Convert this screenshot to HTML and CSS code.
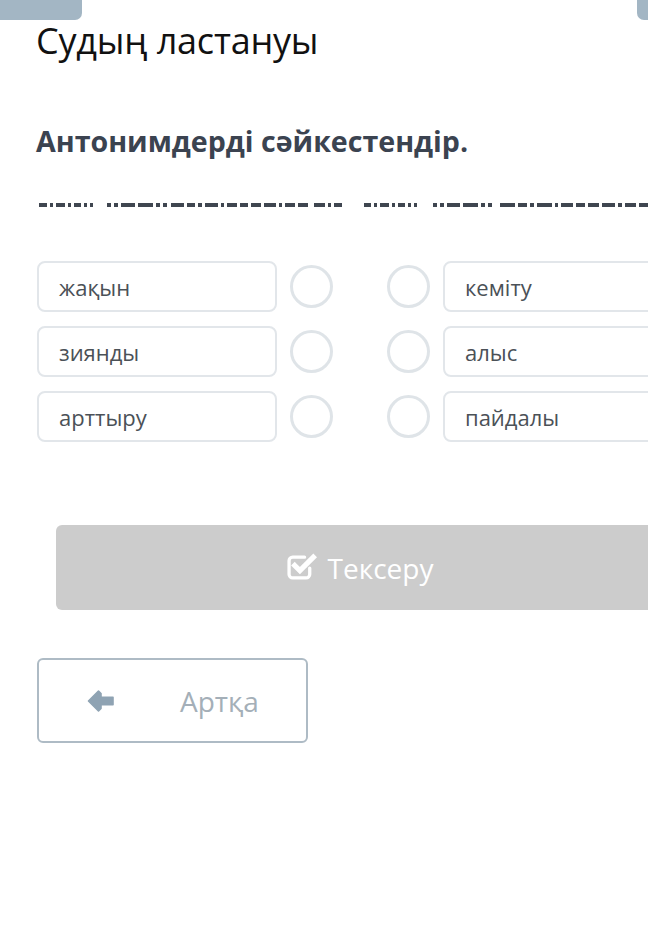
FILE: index.html
```html
<!DOCTYPE html>
<html lang="kk">
<head>
<meta charset="utf-8">
<title>Судың ластануы</title>
<link rel="stylesheet" href="styles.css">
</head>
<body>
<div class="page">
  <div class="topbar">
    <div class="tab tab-left"></div>
    <div class="tab tab-right"></div>
  </div>
  <h1 class="title">Судың ластануы</h1>
  <h2 class="task">Антонимдерді сәйкестендір.</h2>
  <div class="dashes">
    <span class="g g1"><i class="w5"></i><i class="w2"></i><i class="w6"></i><i class="w2"></i><i class="w5"></i><i class="w2"></i><i class="w2"></i></span>
    <span class="g g2"><i class="w2"></i><i class="w2"></i><i class="w7"></i><i class="w8"></i><i class="w2"></i><i class="w2"></i></span>
    <span class="g g3"><i class="w8"></i><i class="w5"></i><i class="w2"></i><i class="w8"></i><i class="w2"></i><i class="w6"></i><i class="w5"></i><i class="w6"></i><i class="w7"></i><i class="w2"></i><i class="w6"></i><i class="w6"></i></span>
    <span class="g g4"><i class="w7"></i><i class="w2"></i><i class="w5"></i></span>
    <span class="g g5"><i class="w5"></i><i class="w2"></i><i class="w6"></i><i class="w2"></i><i class="w5"></i><i class="w2"></i><i class="w2"></i></span>
    <span class="g g6"><i class="w2"></i><i class="w2"></i><i class="w7"></i><i class="w8"></i><i class="w2"></i><i class="w2"></i></span>
    <span class="g g7"><i class="w8"></i><i class="w5"></i><i class="w2"></i><i class="w8"></i><i class="w2"></i><i class="w6"></i><i class="w5"></i><i class="w6"></i><i class="w7"></i><i class="w2"></i><i class="w6"></i><i class="w6"></i></span>
  </div>

  <div class="match">
    <div class="row">
      <div class="item">жақын</div><span class="dot"></span>
      <span class="dot"></span><div class="item">кеміту</div>
    </div>
    <div class="row">
      <div class="item">зиянды</div><span class="dot"></span>
      <span class="dot"></span><div class="item">алыс</div>
    </div>
    <div class="row">
      <div class="item">арттыру</div><span class="dot"></span>
      <span class="dot"></span><div class="item">пайдалы</div>
    </div>
  </div>

  <button class="check" type="button">
    <svg class="check-icon" viewBox="0 0 30 28" width="31" height="29" aria-hidden="true">
      <path d="M22 15.5 V21.5 A3.5 3.5 0 0 1 18.5 25 H5.5 A3.5 3.5 0 0 1 2 21.5 V8.5 A3.5 3.5 0 0 1 5.5 5 H17" fill="none" stroke="#fff" stroke-width="3.2" stroke-linecap="round"/>
      <path d="M7.5 13 L12.5 18 L25.5 5" fill="none" stroke="#fff" stroke-width="5" stroke-linecap="square" stroke-linejoin="miter"/>
    </svg>
    <span>Тексеру</span>
  </button>

  <button class="back" type="button">
    <svg class="back-icon" viewBox="0 0 28 24" width="28" height="24" aria-hidden="true">
      <path d="M1.5 12 L11.5 2 L14 4.5 L14 8.3 L26 8.3 L26 15.7 L14 15.7 L14 19.5 L11.5 22 Z" fill="#8fa3b3" stroke="#8fa3b3" stroke-width="1.6" stroke-linejoin="round"/>
    </svg>
    <span>Артқа</span>
  </button>
</div>
</body>
</html>
```
FILE: styles.css
```css
html, body {
  margin: 0;
  padding: 0;
  background: #ffffff;
  overflow: hidden;
}
body {
  font-family: "Open Sans", "Noto Sans", sans-serif;
  width: 648px;
  height: 946px;
}
.page {
  width: 720px;
  display: flex;
  flex-direction: column;
  align-items: flex-start;
}
.topbar {
  width: 648px;
  height: 20px;
  display: flex;
  justify-content: space-between;
}
.tab {
  height: 20px;
  background: #a3b6c4;
}
.tab-left {
  width: 82px;
  border-bottom-right-radius: 7px;
}
.tab-right {
  width: 11px;
  border-bottom-left-radius: 7px;
}
.title {
  margin: 0 0 0 36px;
  font-weight: 400;
  font-size: 36px;
  line-height: 42px;
  color: #111111;
  letter-spacing: -0.2px;
}
.task {
  margin: 61px 0 0 36px;
  font-weight: 700;
  font-size: 28.6px;
  line-height: 36px;
  color: #3b4350;
}
.dashes {
  margin: 44px 0 0 39px;
  height: 4px;
  display: flex;
  white-space: nowrap;
}
.g {
  display: flex;
  gap: 3px;
  flex: none;
}
.g1 { width: 54px; }
.g2 { width: 60px; margin-left: 14px; }
.g3 { width: 137px; margin-left: 4px; }
.g4 { width: 28px; margin-left: 6px; }
.g5 { width: 53px; margin-left: 22px; }
.g6 { width: 59px; margin-left: 16px; }
.g7 { width: 150px; margin-left: 8px; }
.g i {
  display: block;
  height: 4px;
  background: #3f4650;
}
.w2 { flex: 2 1 0; }
.w5 { flex: 5 1 0; }
.w6 { flex: 6 1 0; }
.w7 { flex: 7 1 0; }
.w8 { flex: 8 1 0; }

.match {
  margin: 54px 0 0 37px;
  display: flex;
  flex-direction: column;
  gap: 14px;
}
.row {
  display: flex;
  align-items: center;
}
.item {
  box-sizing: border-box;
  width: 240px;
  height: 51px;
  border: 2px solid #e2e6ea;
  border-radius: 8px;
  padding: 0 0 0 20px;
  display: flex;
  align-items: center;
  font-size: 22px;
  color: #4b5157;
}
.dot {
  box-sizing: border-box;
  width: 43px;
  height: 43px;
  border: 3px solid #dfe4e8;
  border-radius: 50%;
  margin-left: 13px;
}
.dot + .dot {
  margin-left: 54px;
  margin-right: 13px;
}
.check {
  margin: 83px 0 0 56px;
  width: 608px;
  height: 85px;
  border: none;
  border-radius: 6px;
  background: #cccccc;
  color: #ffffff;
  font-family: "Open Sans", "Noto Sans", sans-serif;
  font-size: 28px;
  display: flex;
  align-items: center;
  justify-content: center;
  gap: 10px;
  padding: 0;
}
.check-icon {
  display: block;
  margin-top: -3px;
}
.back {
  margin: 48px 0 0 37px;
  box-sizing: border-box;
  width: 271px;
  height: 85px;
  border: 2px solid #aebbc5;
  border-radius: 6px;
  background: #ffffff;
  color: #a4afb8;
  font-family: "Open Sans", "Noto Sans", sans-serif;
  font-size: 28px;
  display: flex;
  align-items: center;
  padding: 0 0 0 48px;
}
.back-icon {
  display: block;
}
.back span {
  margin-left: 65px;
}
```
